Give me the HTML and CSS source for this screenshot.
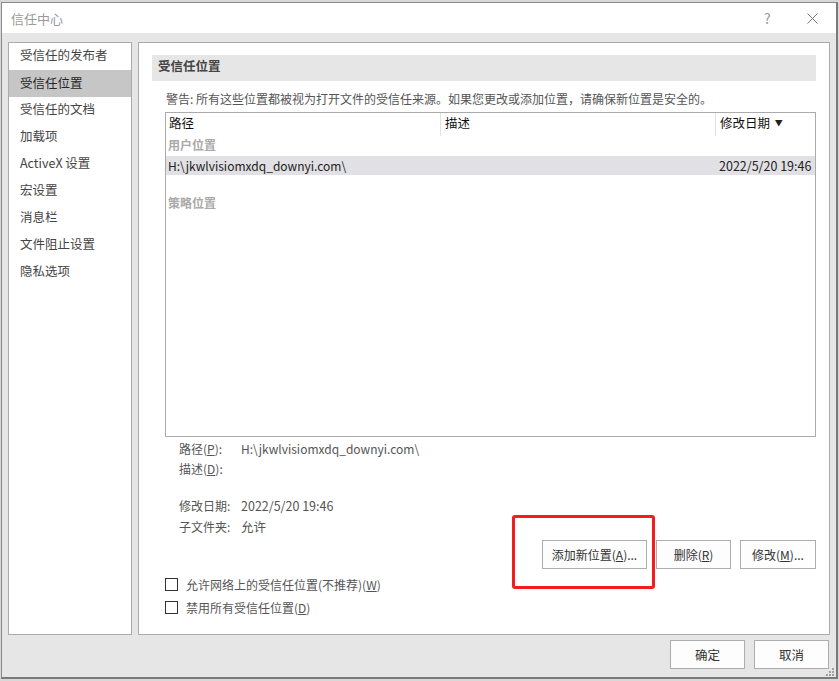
FILE: index.html
```html
<!DOCTYPE html>
<html lang="zh-CN">
<head>
<meta charset="utf-8">
<title>信任中心</title>
<link rel="stylesheet" href="styles.css">
</head>
<body>
<div class="window">
  <div class="titlebar">
    <span class="title">信任中心</span>
    <span class="tb-help">?</span>
    <span class="tb-close"><svg width="11" height="11" viewBox="0 0 11 11"><path d="M0.5 0.5 L10.5 10.5 M10.5 0.5 L0.5 10.5" stroke="#777" stroke-width="1" fill="none"/></svg></span>
  </div>
  <div class="body">
    <div class="panels">
      <ul class="nav">
        <li>受信任的发布者</li>
        <li class="active">受信任位置</li>
        <li>受信任的文档</li>
        <li>加载项</li>
        <li>ActiveX 设置</li>
        <li>宏设置</li>
        <li>消息栏</li>
        <li>文件阻止设置</li>
        <li>隐私选项</li>
      </ul>
      <div class="main">
        <div class="section-head">受信任位置</div>
        <p class="warning">警告: 所有这些位置都被视为打开文件的受信任来源。如果您更改或添加位置，请确保新位置是安全的。</p>
        <div class="list">
          <div class="list-head">
            <div class="col c-path">路径</div>
            <div class="col c-desc">描述</div>
            <div class="col c-date">修改日期 <span class="sort">▼</span></div>
          </div>
          <div class="group">用户位置</div>
          <div class="row selected">
            <div class="c-path">H:\jkwlvisiomxdq_downyi.com\</div>
            <div class="c-desc"></div>
            <div class="c-date">2022/5/20 19:46</div>
          </div>
          <div class="group group-policy">策略位置</div>
        </div>
        <div class="details">
          <span class="dl">路径(<u>P</u>):</span><span class="dv dv-path">H:\jkwlvisiomxdq_downyi.com\</span>
          <span class="dl">描述(<u>D</u>):</span><span class="dv"></span>
          <span class="dl gap">修改日期:</span><span class="dv gap">2022/5/20 19:46</span>
          <span class="dl">子文件夹:</span><span class="dv">允许</span>
        </div>
        <div class="actions">
          <button class="btn btn-add">添加新位置(<u>A</u>)...</button>
          <button class="btn btn-del">删除(<u>R</u>)</button>
          <button class="btn btn-mod">修改(<u>M</u>)...</button>
        </div>
        <label class="check first"><span class="box"></span>允许网络上的受信任位置(不推荐)(<u>W</u>)</label>
        <label class="check"><span class="box"></span>禁用所有受信任位置(<u>D</u>)</label>
      </div>
    </div>
    <div class="footer">
      <button class="btn btn-foot">确定</button>
      <button class="btn btn-foot">取消</button>
    </div>
    <svg class="grip" width="9" height="9" viewBox="0 0 9 9">
      <rect x="6" y="0" width="2" height="2" fill="#a0a0a0"/>
      <rect x="3" y="3" width="2" height="2" fill="#a0a0a0"/>
      <rect x="6" y="3" width="2" height="2" fill="#a0a0a0"/>
      <rect x="0" y="6" width="2" height="2" fill="#a0a0a0"/>
      <rect x="3" y="6" width="2" height="2" fill="#a0a0a0"/>
      <rect x="6" y="6" width="2" height="2" fill="#a0a0a0"/>
    </svg>
  </div>
  <div class="highlight"></div>
</div>
</body>
</html>
```
FILE: styles.css
```css
* { box-sizing: border-box; }
html, body { margin: 0; padding: 0; }
body {
  width: 839px;
  height: 681px;
  background: #d8d8d8;
  font-family: "Noto Sans CJK SC", "Noto Sans", sans-serif;
  font-size: 12px;
  color: #444;
  overflow: hidden;
}
.window {
  position: relative;
  margin: 2px 0 0 1px;
  width: 837px;
  height: 677px;
  border: 1px solid #8a8a8a;
  border-right: 2px solid #7a7a7a;
  border-bottom: 2px solid #7a7a7a;
  background: #e6e6e6;
  display: flex;
  flex-direction: column;
}
.titlebar {
  height: 30px;
  background: #fff;
  display: flex;
  align-items: center;
  padding-left: 9px;
  flex: none;
}
.title { color: #9a9a9a; font-size: 13px; flex: 1; }
.tb-help { color: #999; font-size: 14px; width: 43px; text-align: left; }
.tb-close { width: 11px; display: flex; margin-right: 18px; }
.body {
  position: relative;
  flex: 1;
  display: flex;
  flex-direction: column;
  padding: 9px 6px 0 6px;
}
.panels {
  display: flex;
  gap: 6px;
  height: 593px;
}
.nav {
  list-style: none;
  margin: 0;
  padding: 0;
  width: 124px;
  background: #fff;
  border: 1px solid #ababab;
}
.nav li {
  height: 27px;
  line-height: 23px;
  padding-left: 11px;
  font-size: 12.5px;
  color: #444;
  white-space: nowrap;
}
.nav li.active { background: #c6c6c6; color: #262626; line-height: 25px; }
.main {
  flex: 1;
  background: #fff;
  border: 1px solid #ababab;
  padding: 12px 13px 0 13px;
  position: relative;
}
.section-head {
  height: 26px;
  background: #e6e6e6;
  line-height: 22px;
  padding-left: 6px;
  font-weight: bold;
  font-size: 12.5px;
  color: #444;
}
.warning {
  margin: 9px 0 0 14px;
  line-height: 18px;
  color: #555;
  white-space: nowrap;
}
.list {
  margin: 4px 0 0 13px;
  height: 325px;
  border: 1px solid #ababab;
  background: #fff;
}
.list-head, .row { display: flex; }
.list-head { height: 23px; line-height: 20px; color: #111; font-size: 12.5px; }
.col { border-right: 1px solid #e2e2e2; }
.c-path { width: 275px; padding-left: 3px; white-space: nowrap; }
.c-desc { width: 275px; padding-left: 4px; }
.c-date { flex: 1; padding-left: 4px; white-space: nowrap; }
.list-head .c-date { border-right: none; }
.sort { font-size: 8px; color: #222; vertical-align: 2px; margin-left: 2px; }
.group {
  height: 20px;
  line-height: 18px;
  padding-left: 2px;
  color: #aaa;
  font-weight: bold;
}
.group-policy { margin-top: 19px; }
.row { height: 19px; line-height: 19px; color: #222; }
.row.selected { background: #e1e0e4; }
.row .c-path { padding-left: 2px; font-size: 12px; }
.row .c-date { padding-left: 3px; font-size: 12.5px; }
.details {
  display: grid;
  grid-template-columns: 62px auto;
  grid-template-rows: 20px 20px 38px 21px;
  align-items: center;
  margin: 1px 0 0 27px;
  color: #555;
}
.details .gap { align-self: end; height: 20px; line-height: 20px; }
.dv { font-size: 12.5px; }
.dv.dv-path { font-size: 12px; }
.actions {
  display: flex;
  justify-content: flex-end;
  gap: 9px;
  margin-top: 3px;
  height: 29px;
}
.btn {
  font-family: inherit;
  font-size: 12px;
  color: #333;
  background: #fdfdfd;
  border: 1px solid #adadad;
  height: 29px;
  padding: 0;
  margin: 0;
}
.btn-add { width: 105px; }
.btn-del { width: 75px; }
.btn-mod { width: 76px; }
.check {
  display: flex;
  align-items: center;
  height: 23px;
  margin-left: 13px;
  color: #555;
}
.check.first { margin-top: 4px; }
.box {
  width: 13px;
  height: 13px;
  border: 1px solid #333;
  margin-right: 8px;
  background: #fff;
}
.footer {
  display: flex;
  justify-content: flex-end;
  gap: 9px;
  padding-top: 5px;
  padding-right: 1px;
}
.btn-foot { width: 75px; height: 29px; font-size: 12.5px; }
.grip { position: absolute; right: 1px; bottom: 0; }
.highlight {
  position: absolute;
  left: 510px;
  top: 512px;
  width: 143px;
  height: 74px;
  border: 3px solid #f51c1c;
  border-radius: 3px;
}
```
